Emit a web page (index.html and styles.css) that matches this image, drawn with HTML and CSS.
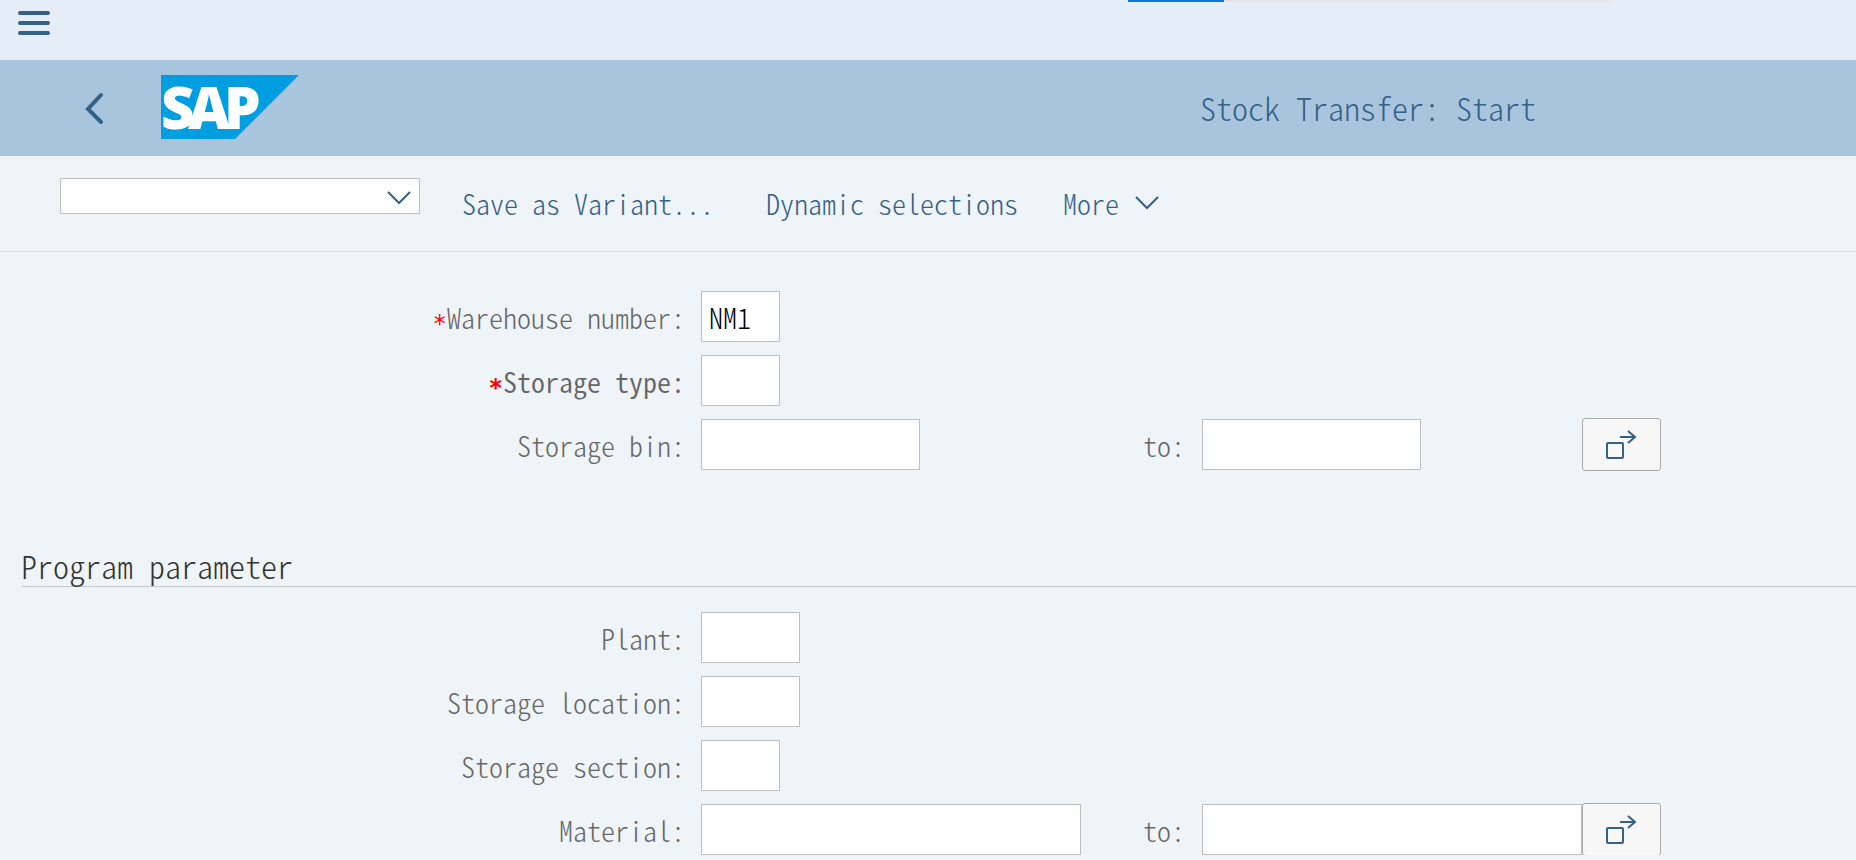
FILE: index.html
```html
<!DOCTYPE html>
<html lang="en">
<head>
<meta charset="utf-8">
<title>Stock Transfer: Start</title>
<link rel="stylesheet" href="styles.css">
</head>
<body>
<svg class="sprite" aria-hidden="true">
  <symbol id="multi" viewBox="0 0 32 30">
    <rect x="1" y="13" width="16" height="15" rx="1"/>
    <path d="M14 7H29M22 1l7 6-7 6"/>
  </symbol>
  <symbol id="down" viewBox="0 0 24 14"><path d="M1 1l11 11L23 1"/></symbol>
</svg>

<div class="shell">
  <div class="progress"><span class="progress-value"></span></div>
  <button class="icon-button" type="button" aria-label="Menu">
    <svg class="burger" viewBox="0 0 32 24"><path d="M2 2H30M2 12H30M2 22H30"/></svg>
  </button>
</div>

<header class="header">
  <div class="brand">
    <button class="icon-button" type="button" aria-label="Back">
      <svg class="back" viewBox="0 0 18 32"><path d="M15 4L2 18l13 13"/></svg>
    </button>
    <svg class="logo" viewBox="0 0 138 64" role="img" aria-label="SAP">
      <path class="logo-shape" d="M0 0H138L74 64H0Z"/>
      <text class="logo-text" x="0 27 63" y="54">SAP</text>
    </svg>
  </div>
  <h1 class="title">Stock Transfer: Start</h1>
</header>

<nav class="toolbar" aria-label="Actions">
  <div class="command">
    <select class="command-select" aria-label="Command"><option></option></select>
    <svg class="chevron command-chevron"><use href="#down"/></svg>
  </div>
  <div class="actions">
    <button class="action action-dialog" type="button">Save as Variant...</button>
    <button class="action" type="button">Dynamic selections</button>
    <button class="action" type="button">More <svg class="chevron"><use href="#down"/></svg></button>
  </div>
</nav>

<main class="content">
  <section class="form">
    <div class="row">
      <label class="label" for="warehouse"><span class="required">*</span>Warehouse number:</label>
      <div class="from"><input class="field w-short" id="warehouse" value="NM1"></div>
    </div>
    <div class="row">
      <label class="label active" for="type"><span class="required">*</span>Storage type:</label>
      <div class="from"><input class="field w-short" id="type"></div>
    </div>
    <div class="row">
      <label class="label" for="bin">Storage bin:</label>
      <div class="from"><input class="field w-medium" id="bin"><label class="to" for="bin-to">to:</label></div>
      <input class="field w-medium" id="bin-to">
      <button class="multi" type="button" aria-label="Multiple selection"><svg class="multi-icon"><use href="#multi"/></svg></button>
    </div>
  </section>

  <h2 class="section-title">Program parameter</h2>
  <section class="form">
    <div class="row">
      <label class="label" for="plant">Plant:</label>
      <div class="from"><input class="field w-code" id="plant"></div>
    </div>
    <div class="row">
      <label class="label" for="location">Storage location:</label>
      <div class="from"><input class="field w-code" id="location"></div>
    </div>
    <div class="row">
      <label class="label" for="section">Storage section:</label>
      <div class="from"><input class="field w-short" id="section"></div>
    </div>
    <div class="row">
      <label class="label" for="material">Material:</label>
      <div class="from"><input class="field w-long" id="material"><label class="to" for="material-to">to:</label></div>
      <input class="field w-long" id="material-to">
      <button class="multi" type="button" aria-label="Multiple selection"><svg class="multi-icon"><use href="#multi"/></svg></button>
    </div>
  </section>
</main>
</body>
</html>
```
FILE: styles.css
```css
* { box-sizing: border-box; }

body {
  margin: 0;
  background: #eff4f8;
  color: #666;
  font-family: "Noto Sans CJK JP", monospace;
  font-feature-settings: "hwid";
  font-weight: 300;
  font-size: 28px;
  line-height: 40px;
}

button, input, select {
  font: inherit;
  font-feature-settings: inherit;
  color: inherit;
}

button {
  padding: 0;
  border: 0;
  background: none;
}

svg {
  display: block;
  fill: none;
  stroke: #346187;
  stroke-width: 2;
}

.sprite { position: absolute; width: 0; height: 0; }

.shell {
  position: relative;
  height: 60px;
  padding: 11px 18px;
  background: #e5edf7;
}

.progress {
  position: absolute;
  top: 0;
  left: 1128px;
  width: 482px;
  height: 2px;
  background: #e5e5e5;
}

.progress-value {
  display: block;
  width: 20%;
  height: 100%;
  background: #0a78d6;
}

.icon-button { display: block; }

.burger {
  width: 32px;
  height: 24px;
  stroke-width: 4;
  stroke-linecap: round;
}

.header {
  display: grid;
  grid-template-columns: 1200fr 656fr;
  align-items: center;
  height: 96px;
  padding-bottom: 2px;
  background: #a9c5de;
}

.brand {
  display: flex;
  align-items: center;
  gap: 57px;
  padding-left: 86px;
}

.back {
  width: 18px;
  height: 32px;
  overflow: visible;
  stroke-width: 4;
  stroke-linecap: round;
}

.logo { width: 138px; height: 64px; overflow: visible; stroke: none; }
.logo-shape { fill: #009ee0; }
.logo-text {
  fill: #fff;
  font-family: "Open Sans", sans-serif;
  font-feature-settings: normal;
  font-size: 58px;
  font-weight: 800;
}

.title {
  margin: 0;
  color: #346187;
  font-size: 32px;
  font-weight: 300;
}

.toolbar {
  display: flex;
  align-items: flex-start;
  gap: 42px;
  height: 96px;
  padding: 22px 60px;
  border-bottom: 1px solid #d1e0ee;
}

.command { position: relative; width: 360px; }

.command-select {
  display: block;
  width: 100%;
  height: 36px;
  border: 1px solid #bfbfbf;
  border-radius: 0;
  background: #fff;
  appearance: none;
}

.chevron { width: 24px; height: 14px; }

.command-chevron {
  position: absolute;
  top: 13px;
  right: 9px;
  pointer-events: none;
}

.actions {
  display: flex;
  gap: 45px;
  padding-top: 5px;
  color: #346187;
}

.action { display: flex; align-items: center; gap: 16px; }
.action-dialog { padding-right: 7px; }

.content { padding-top: 39px; }

.form { display: grid; gap: 13px; }

.row {
  display: grid;
  grid-template-columns: 701fr 501fr 380fr 274fr;
  align-items: center;
}

.label { padding-right: 16px; text-align: right; }
.active { font-weight: 350; }
.active .required { font-weight: 700; }

.required {
  color: #f00;
  font-family: "DejaVu Sans Mono", monospace;
  font-size: 24px;
  line-height: 1px;
  vertical-align: -3px;
}

.from {
  display: flex;
  align-items: center;
  justify-content: space-between;
}

.to { padding-right: 17px; }

.field {
  height: 51px;
  padding: 0 7px;
  border: 1px solid #bfbfbf;
  border-radius: 0;
  background: #fff;
  color: #000;
}

.w-short { width: 79px; }
.w-code { width: 99px; }
.w-medium { width: 219px; }
.w-long { width: 380px; }

.multi {
  display: grid;
  place-items: center;
  width: 79px;
  height: 53px;
  margin: -1px 0;
  border: 1px solid #ababab;
  border-radius: 3px;
  background: #f7f7f7;
}

.multi-icon { width: 32px; height: 30px; }

.section-title {
  margin: 75px 0 25px 21px;
  padding-bottom: 1px;
  border-bottom: 1px solid #c4c8cc;
  color: #333;
  font-size: 32px;
  font-weight: 300;
}
```
